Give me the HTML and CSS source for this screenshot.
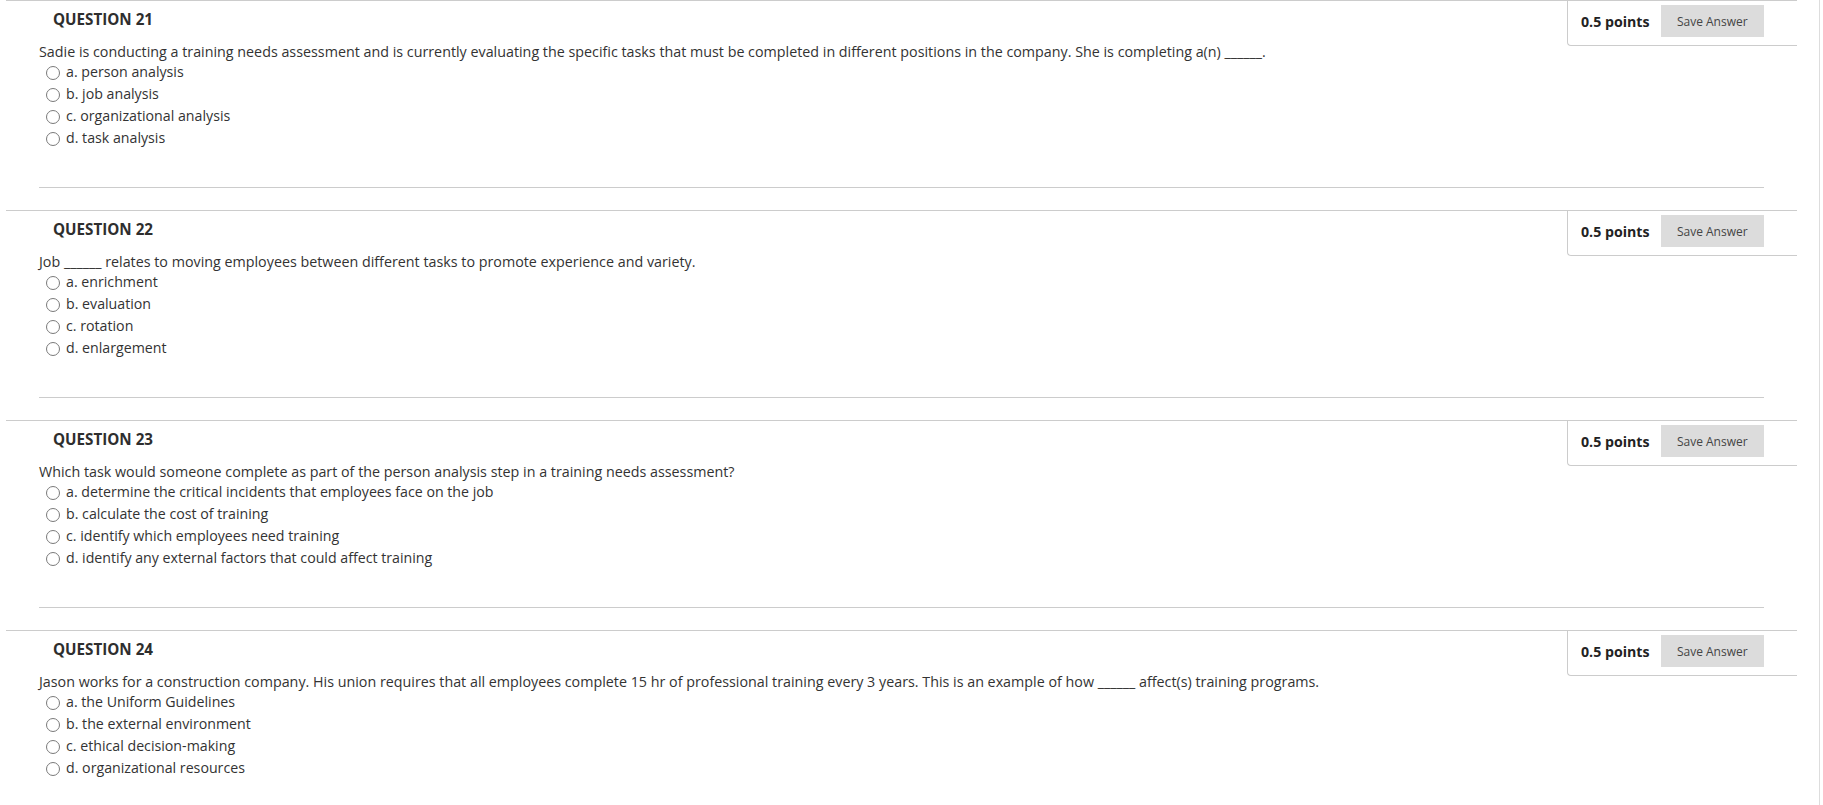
FILE: index.html
```html
<!DOCTYPE html>
<html lang="en">
<head>
<meta charset="utf-8">
<title>Questions</title>
<link rel="stylesheet" href="styles.css">
</head>
<body>
<div class="page">

  <section class="question">
    <div class="q-main">
      <h3 class="q-title">QUESTION 21</h3>
      <p class="q-text">Sadie is conducting a training needs assessment and is currently evaluating the specific tasks that must be completed in different positions in the company. She is completing a(n) ______.</p>
      <ul class="options">
        <li><input type="radio" name="q21"><span>a. person analysis</span></li>
        <li><input type="radio" name="q21"><span>b. job analysis</span></li>
        <li><input type="radio" name="q21"><span>c. organizational analysis</span></li>
        <li><input type="radio" name="q21"><span>d. task analysis</span></li>
      </ul>
    </div>
    <div class="points-box"><span class="points">0.5 points</span><button class="save">Save Answer</button></div>
    <hr class="sep">
  </section>

  <section class="question">
    <div class="q-main">
      <h3 class="q-title">QUESTION 22</h3>
      <p class="q-text">Job ______ relates to moving employees between different tasks to promote experience and variety.</p>
      <ul class="options">
        <li><input type="radio" name="q22"><span>a. enrichment</span></li>
        <li><input type="radio" name="q22"><span>b. evaluation</span></li>
        <li><input type="radio" name="q22"><span>c. rotation</span></li>
        <li><input type="radio" name="q22"><span>d. enlargement</span></li>
      </ul>
    </div>
    <div class="points-box"><span class="points">0.5 points</span><button class="save">Save Answer</button></div>
    <hr class="sep">
  </section>

  <section class="question">
    <div class="q-main">
      <h3 class="q-title">QUESTION 23</h3>
      <p class="q-text">Which task would someone complete as part of the person analysis step in a training needs assessment?</p>
      <ul class="options">
        <li><input type="radio" name="q23"><span>a. determine the critical incidents that employees face on the job</span></li>
        <li><input type="radio" name="q23"><span>b. calculate the cost of training</span></li>
        <li><input type="radio" name="q23"><span>c. identify which employees need training</span></li>
        <li><input type="radio" name="q23"><span>d. identify any external factors that could affect training</span></li>
      </ul>
    </div>
    <div class="points-box"><span class="points">0.5 points</span><button class="save">Save Answer</button></div>
    <hr class="sep">
  </section>

  <section class="question">
    <div class="q-main">
      <h3 class="q-title">QUESTION 24</h3>
      <p class="q-text">Jason works for a construction company. His union requires that all employees complete 15 hr of professional training every 3 years. This is an example of how ______ affect(s) training programs.</p>
      <ul class="options">
        <li><input type="radio" name="q24"><span>a. the Uniform Guidelines</span></li>
        <li><input type="radio" name="q24"><span>b. the external environment</span></li>
        <li><input type="radio" name="q24"><span>c. ethical decision-making</span></li>
        <li><input type="radio" name="q24"><span>d. organizational resources</span></li>
      </ul>
    </div>
    <div class="points-box"><span class="points">0.5 points</span><button class="save">Save Answer</button></div>
    <hr class="sep">
  </section>

</div>
</body>
</html>
```

FILE: styles.css
```css
* { box-sizing: border-box; }

html, body {
  margin: 0;
  padding: 0;
  background: #ffffff;
}

body {
  font-family: "Open Sans", "Liberation Sans", Arial, sans-serif;
  color: #333333;
  overflow: hidden;
}

.page {
  width: 1820px;
  height: 805px;
  border-right: 1px solid #dddddd;
  padding-left: 6px;
}

.question {
  width: 1791px;
  height: 210px;
  border-top: 1px solid #cccccc;
  display: grid;
  grid-template-columns: 1fr 230px;
  grid-template-rows: auto 1fr;
}

.q-main {
  padding-left: 33px;
  min-width: 0;
}

.q-title {
  margin: 0;
  padding: 8px 0 0 14px;
  font-size: 15.2px;
  line-height: 20px;
  font-weight: 700;
  color: #2e2e2e;
}

.q-text {
  margin: 14px 0 0 0;
  font-size: 14.3px;
  line-height: 17px;
  white-space: nowrap;
}

.options {
  list-style: none;
  margin: 0;
  padding: 0 0 0 7px;
}

.options li {
  display: flex;
  align-items: center;
  height: 22px;
  font-size: 14.2px;
}

.options input[type="radio"] {
  appearance: none;
  -webkit-appearance: none;
  width: 14px;
  height: 14px;
  margin: 4px 6px 0 0;
  border: 1px solid #7a7a7a;
  border-radius: 50%;
  background: #ffffff;
  flex: none;
}

.points-box {
  align-self: start;
  display: flex;
  align-items: center;
  gap: 11px;
  height: 45px;
  padding: 4px 33px 8px 13px;
  border-left: 1px solid #cccccc;
  border-bottom: 1px solid #cccccc;
  border-bottom-left-radius: 4px;
}

.points {
  font-size: 14.2px;
  font-weight: 700;
  color: #222222;
  white-space: nowrap;
}

.save {
  width: 104px;
  height: 32px;
  border: none;
  background: #dcdcdc;
  color: #444444;
  font-family: "Open Sans", "Liberation Sans", Arial, sans-serif;
  font-size: 12px;
  padding: 0;
}

.sep {
  grid-column: 1 / -1;
  align-self: end;
  margin: 0 33px 22px 33px;
  border: none;
  border-top: 1px solid #cccccc;
  height: 0;
}
```
